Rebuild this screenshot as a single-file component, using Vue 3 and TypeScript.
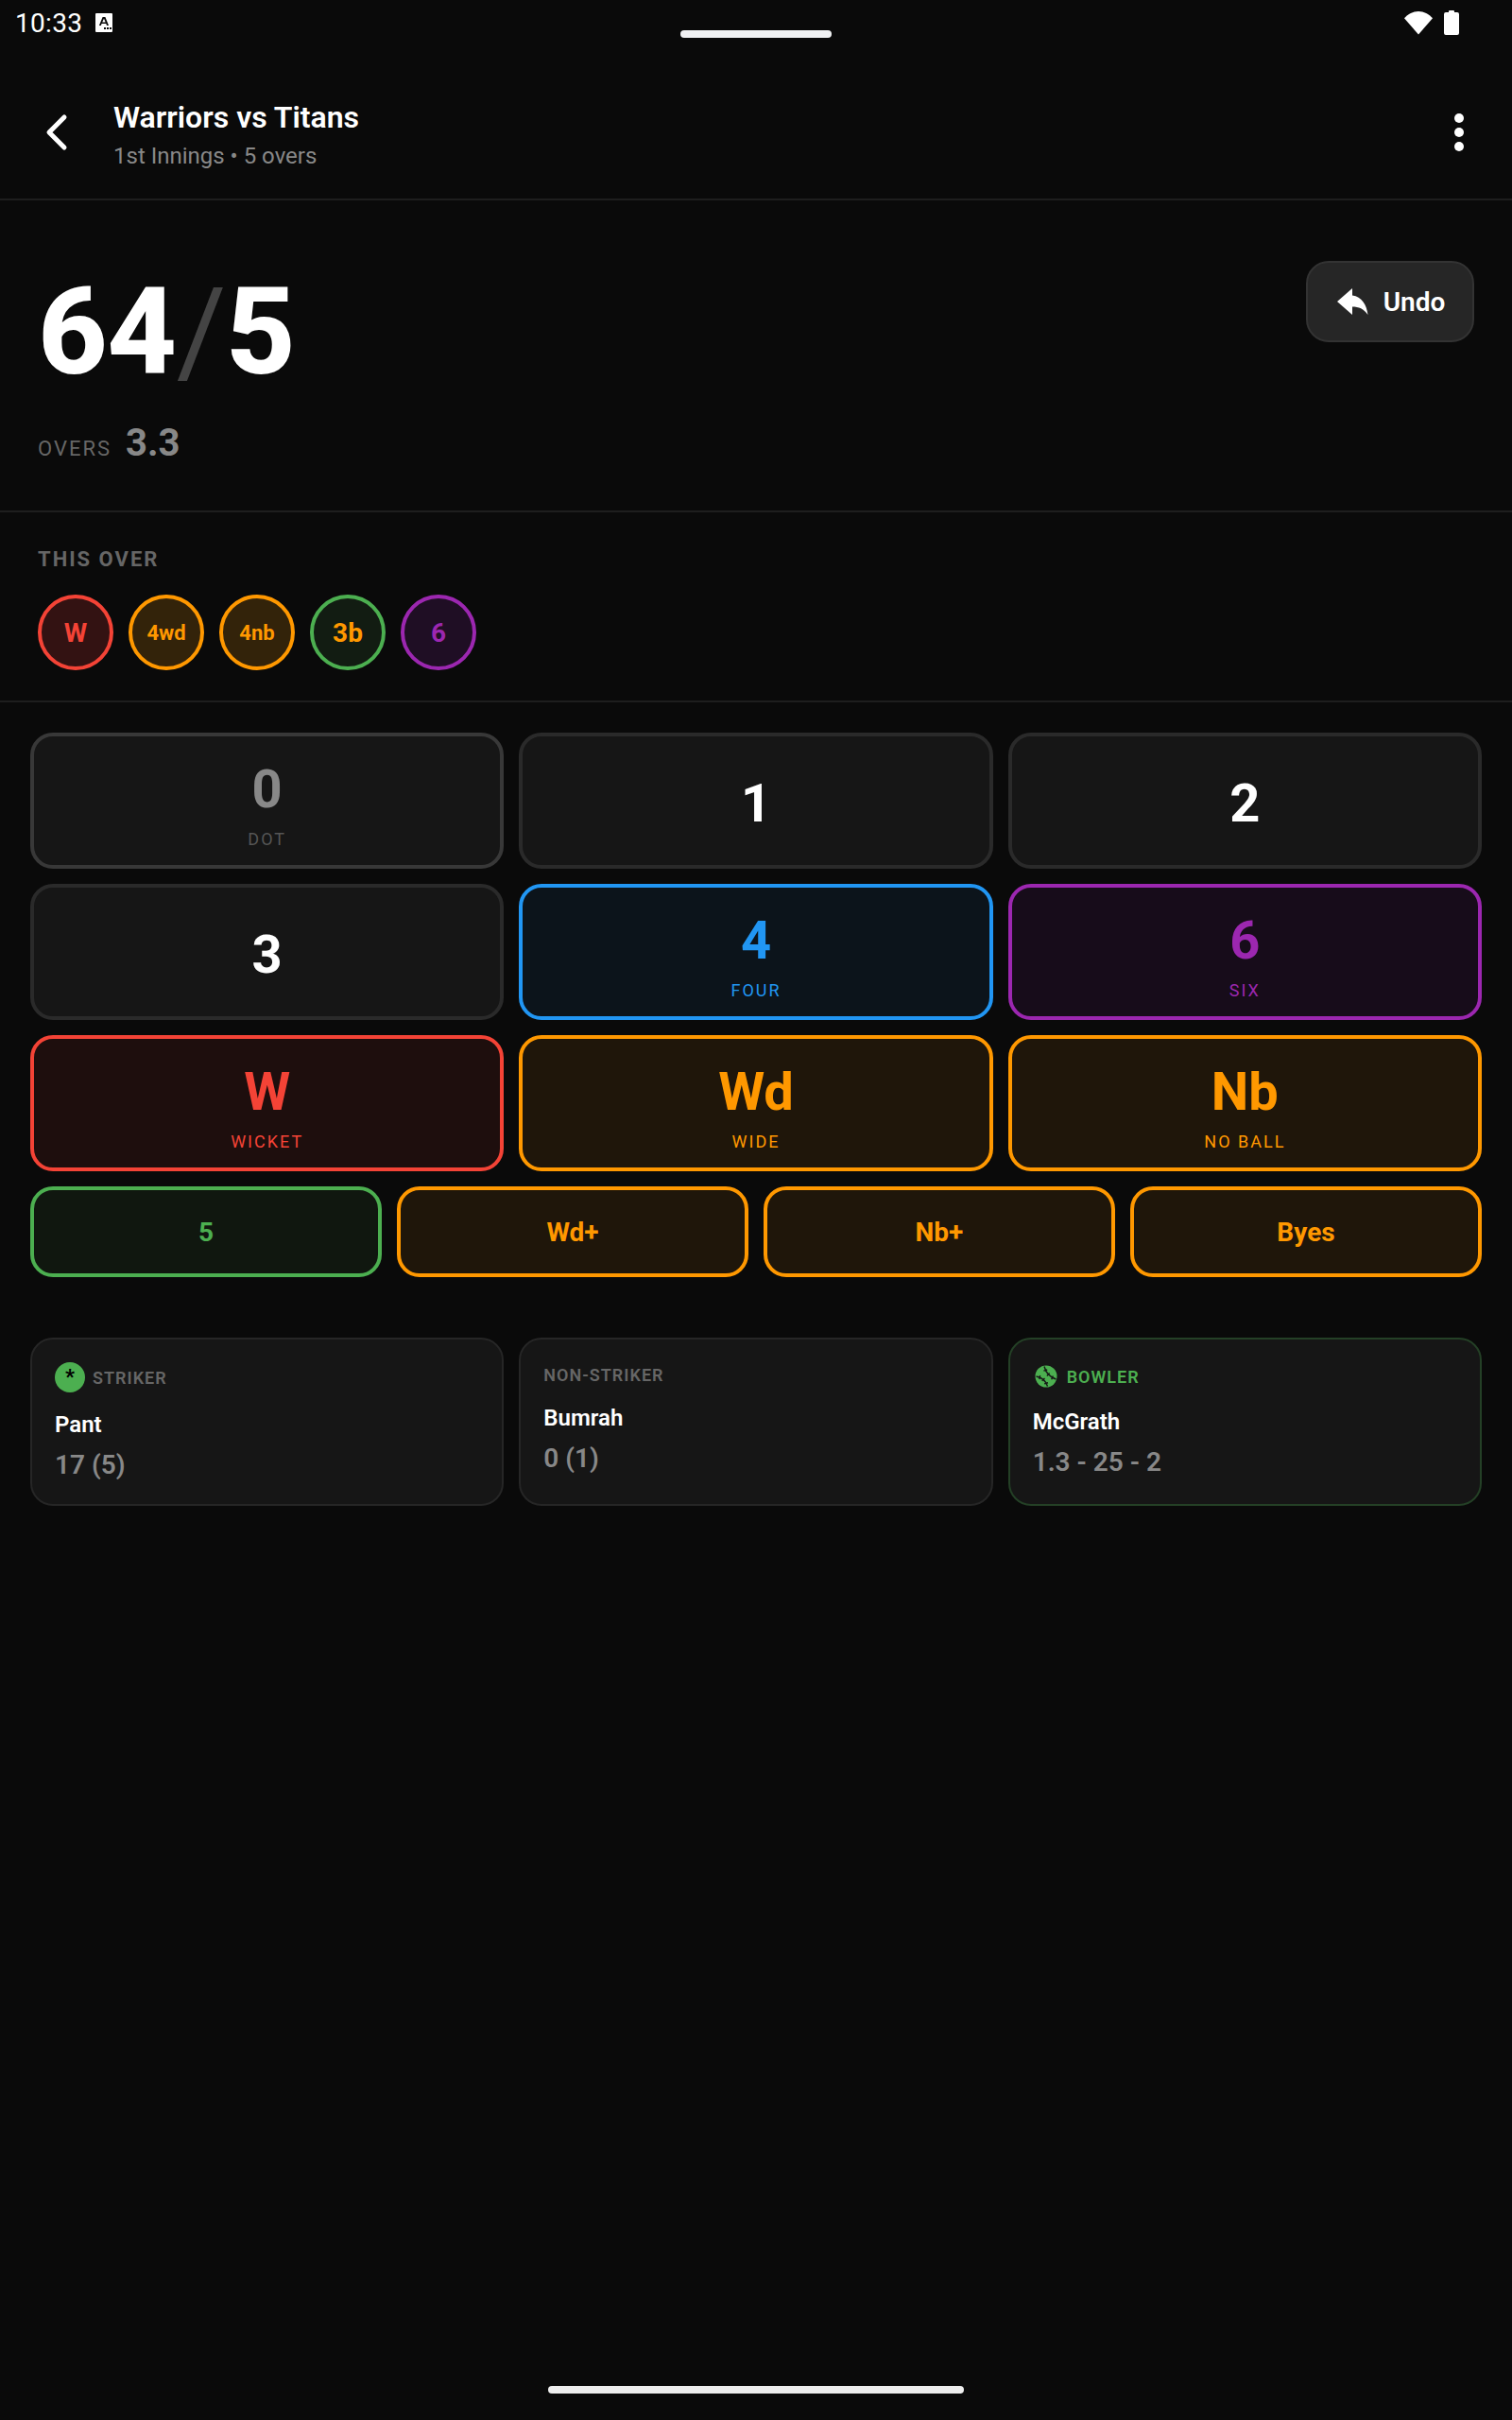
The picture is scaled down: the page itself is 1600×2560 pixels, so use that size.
<script setup lang="ts">
type Pad = { main: string; sub?: string; tone: string }

const balls = [
  { label: 'W', tone: 'red' },
  { label: '4wd', tone: 'amber' },
  { label: '4nb', tone: 'amber' },
  { label: '3b', tone: 'green' },
  { label: '6', tone: 'purple' },
]

const pads: Pad[] = [
  { main: '0', sub: 'DOT', tone: 'dot' },
  { main: '1', tone: 'plain' },
  { main: '2', tone: 'plain' },
  { main: '3', tone: 'plain' },
  { main: '4', sub: 'FOUR', tone: 'blue' },
  { main: '6', sub: 'SIX', tone: 'purple' },
  { main: 'W', sub: 'WICKET', tone: 'red' },
  { main: 'Wd', sub: 'WIDE', tone: 'amber' },
  { main: 'Nb', sub: 'NO BALL', tone: 'amber' },
]

const extras = [
  { main: '5', tone: 'green' },
  { main: 'Wd+', tone: 'amber' },
  { main: 'Nb+', tone: 'amber' },
  { main: 'Byes', tone: 'amber' },
]
</script>

<template>
  <div class="screen">
    <div class="pill-top"></div>

    <div class="status">
      <div class="status__left">
        <span class="clock">10:33</span>
        <svg class="kb" viewBox="0 0 18 20" width="18" height="20">
          <path fill="#fff" fill-rule="evenodd" d="M1 0h16a1 1 0 0 1 1 1v18a1 1 0 0 1-1 1H1a1 1 0 0 1-1-1V1a1 1 0 0 1 1-1zM7.600 4 3.900 13h2l.7-1.900h4.700l.7 1.900h2L10.400 4zM7.200 9.500l1.800-3.700 1.700 3.700zM9 15h2v2H9zM12 15h2v2h-2zM15 15h2v2h-2z"/>
        </svg>
      </div>
      <div class="status__right">
        <svg viewBox="0 0 30 26" width="30" height="26">
          <path fill="#fff" d="M15 25.500 0 8.200C4 4 9.200 1 15 1s11 3 15 7.200z"/>
        </svg>
        <svg viewBox="0 0 16 26" width="16" height="26">
          <path fill="#fff" d="M5 2V1A1 1 0 0 1 6 0h4a1 1 0 0 1 1 1v1h3a2 2 0 0 1 2 2V24a2 2 0 0 1-2 2H2a2 2 0 0 1-2-2V4a2 2 0 0 1 2-2z"/>
        </svg>
      </div>
    </div>

    <header class="topbar">
      <button class="iconbtn" type="button" aria-label="Back">
        <svg viewBox="0 0 24 40" width="24" height="40">
          <path d="M20 4 4 20l16 16" fill="none" stroke="#fff" stroke-width="5" stroke-linecap="round" stroke-linejoin="round"/>
        </svg>
      </button>
      <div class="topbar__title">
        <div class="title">Warriors vs Titans</div>
        <div class="subtitle">1st Innings • 5 overs</div>
      </div>
      <button class="iconbtn iconbtn--more" type="button" aria-label="More">
        <i></i><i></i><i></i>
      </button>
    </header>

    <section class="score">
      <div>
        <div class="runs">64<span class="slash">/</span>5</div>
        <div class="overs"><span class="overs__label">OVERS</span><span class="overs__value">3.3</span></div>
      </div>
      <button class="undo" type="button">
        <svg viewBox="0 0 33 28" width="33" height="28">
          <path fill="#fff" d="M16 0 0 14l16 14v-8.500c7 0 12 2 16.500 8.500C31 17 26 9 16 7.500z"/>
        </svg>
        <span>Undo</span>
      </button>
    </section>

    <section class="thisover">
      <div class="thisover__label">THIS OVER</div>
      <div class="balls">
        <div v-for="b in balls" :key="b.label" :class="['ball', `ball--${b.tone}`, { 'ball--long': b.label.length > 2 }]">{{ b.label }}</div>
      </div>
    </section>

    <section class="pads">
      <div class="pads__grid">
        <button v-for="p in pads" :key="p.main + p.tone" type="button" :class="['pad', `tone-${p.tone}`]">
          <span class="pad__main">{{ p.main }}</span>
          <span v-if="p.sub" class="pad__sub">{{ p.sub }}</span>
        </button>
      </div>
      <div class="pads__extras">
        <button v-for="e in extras" :key="e.main" type="button" :class="['extra', `tone-${e.tone}`]">{{ e.main }}</button>
      </div>
    </section>

    <section class="players">
      <div class="card">
        <div class="card__head">
          <span class="star">*</span>
          <span class="card__role">STRIKER</span>
        </div>
        <div class="card__name">Pant</div>
        <div class="card__stat">17 (5)</div>
      </div>
      <div class="card">
        <div class="card__head card__head--plain">
          <span class="card__role">NON-STRIKER</span>
        </div>
        <div class="card__name">Bumrah</div>
        <div class="card__stat">0 (1)</div>
      </div>
      <div class="card card--bowler">
        <div class="card__head card__head--bowl">
          <svg viewBox="0 0 28 28" width="28" height="28">
            <g transform="translate(2 2)">
              <circle cx="12" cy="12" r="11.500" fill="#4caf50"/>
              <path d="M10 1.500Q12.500 11.500 22.500 15M9.400 6.100 13.200 5M12.900 11.400 15.600 8.600M17.700 15.200 19.300 11.500M1.500 12Q10.500 13.500 13.500 22.500M4.800 15 5.600 11M7.700 16.800 10.500 14M10.200 19.700 14 18.700" fill="none" stroke="#161616" stroke-width="1.400"/>
            </g>
          </svg>
          <span class="card__role card__role--green">BOWLER</span>
        </div>
        <div class="card__name">McGrath</div>
        <div class="card__stat">1.3 - 25 - 2</div>
      </div>
    </section>

    <div class="pill-bottom"></div>
  </div>
</template>

<style>
html,
body {
  margin: 0;
  background: #0a0a0a;
}
</style>

<style scoped>
* {
  box-sizing: border-box;
}

button {
  font-family: inherit;
  padding: 0;
  border: none;
  background: none;
}

.screen {
  position: relative;
  height: 2560px;
  display: flex;
  flex-direction: column;
  background: #0a0a0a;
  color: #fff;
  font-family: Roboto, 'Liberation Sans', sans-serif;
  overflow: hidden;
}

.pill-top {
  position: absolute;
  left: 720px;
  top: 32px;
  width: 160px;
  height: 8px;
  border-radius: 4px;
  background: #f0f1f3;
}

.pill-bottom {
  position: absolute;
  left: 580px;
  bottom: 28px;
  width: 440px;
  height: 8px;
  border-radius: 4px;
  background: #eee;
}

.status {
  height: 48px;
  padding: 0 56px 0 16px;
  display: flex;
  justify-content: space-between;
  align-items: center;
}

.status__left {
  display: flex;
  align-items: center;
  gap: 14px;
}

.clock {
  font-size: 28px;
  letter-spacing: 0.3px;
}

.status__right {
  display: flex;
  align-items: center;
  gap: 12px;
}

.topbar {
  height: 164px;
  padding: 22px 36px 0 24px;
  display: flex;
  align-items: center;
  border-bottom: 2px solid #1e1e1e;
}

.iconbtn {
  width: 72px;
  height: 72px;
  display: flex;
  align-items: center;
  justify-content: center;
}

.iconbtn--more {
  flex-direction: column;
  gap: 5px;
  width: 40px;
}

.iconbtn--more i {
  width: 10px;
  height: 10px;
  border-radius: 50%;
  background: #fff;
}

.topbar__title {
  flex: 1;
  margin-left: 24px;
  padding-top: 5px;
}

.title {
  font-size: 32px;
  font-weight: 600;
  line-height: 40px;
}

.subtitle {
  margin-top: 5px;
  font-size: 24px;
  line-height: 32px;
  color: #888;
}

.score {
  height: 330px;
  padding: 64px 40px 0;
  display: flex;
  justify-content: space-between;
  align-items: flex-start;
  border-bottom: 2px solid #1e1e1e;
}

.runs {
  font-size: 128px;
  font-weight: 800;
  line-height: 150px;
  letter-spacing: -0.5px;
}

.slash {
  font-weight: 400;
  color: #444;
}

.overs {
  margin-top: 19px;
  display: flex;
  align-items: baseline;
  gap: 15px;
}

.overs__label {
  font-size: 22px;
  letter-spacing: 2px;
  color: #666;
}

.overs__value {
  font-size: 40px;
  font-weight: 700;
  color: #888;
}

.undo {
  width: 178px;
  height: 86px;
  padding-left: 2px;
  display: flex;
  align-items: center;
  justify-content: center;
  gap: 16px;
  border: 2px solid #333;
  border-radius: 24px;
  background: #262626;
  color: #fff;
  font-size: 28px;
  font-weight: 600;
}

.thisover {
  height: 201px;
  padding: 36px 40px 0;
  border-bottom: 2px solid #1e1e1e;
}

.thisover__label {
  font-size: 22px;
  font-weight: 700;
  line-height: 28px;
  letter-spacing: 2px;
  color: #666;
}

.balls {
  margin-top: 23px;
  display: flex;
  gap: 16px;
}

.ball {
  width: 80px;
  height: 80px;
  display: flex;
  align-items: center;
  justify-content: center;
  border: 4px solid;
  border-radius: 50%;
  font-size: 28px;
  font-weight: 700;
}

.ball--long {
  font-size: 22px;
}

.ball--red {
  color: #f44336;
  border-color: #f44336;
  background: #331212;
}

.ball--amber {
  color: #ff9800;
  border-color: #ff9800;
  background: #33230a;
}

.ball--green {
  color: #ff9800;
  border-color: #4caf50;
  background: #121c12;
}

.ball--purple {
  color: #9c27b0;
  border-color: #9c27b0;
  background: #1f0e24;
}

.pads {
  padding: 32px 32px 0;
  display: flex;
  flex-direction: column;
  gap: 16px;
}

.pads__grid {
  display: grid;
  grid-template-columns: repeat(3, 1fr);
  grid-auto-rows: 144px;
  gap: 16px;
}

.pads__extras {
  display: grid;
  grid-template-columns: repeat(4, 1fr);
  gap: 16px;
}

.pad,
.extra {
  border: 4px solid;
  border-radius: 24px;
}

.pad {
  padding-top: 6px;
  display: flex;
  flex-direction: column;
  align-items: center;
  justify-content: center;
}

.pad__main {
  font-size: 56px;
  font-weight: 700;
  line-height: 66px;
}

.pad__sub {
  margin-top: 9px;
  font-size: 18px;
  line-height: 22px;
  letter-spacing: 2px;
}

.extra {
  height: 96px;
  font-size: 28px;
  font-weight: 700;
}

.tone-plain {
  color: #fff;
  border-color: #2a2a2a;
  background: #161616;
}

.tone-dot {
  color: #888;
  border-color: #383838;
  background: #161616;
}

.tone-dot .pad__sub {
  color: #555;
}

.tone-blue {
  color: #2196f3;
  border-color: #2196f3;
  background: #0c141b;
}

.tone-purple {
  color: #9c27b0;
  border-color: #9c27b0;
  background: #170c1a;
}

.tone-red {
  color: #f44336;
  border-color: #f44336;
  background: #1e0e0d;
}

.tone-amber {
  color: #ff9800;
  border-color: #ff9800;
  background: #1f160a;
}

.tone-green {
  color: #4caf50;
  border-color: #4caf50;
  background: #10170f;
}

.players {
  margin-top: 64px;
  padding: 0 32px;
  display: grid;
  grid-template-columns: repeat(3, 1fr);
  gap: 16px;
}

.card {
  height: 178px;
  padding: 24px;
  border: 2px solid #262626;
  border-radius: 24px;
  background: #161616;
}

.card--bowler {
  border-color: #244026;
}

.card__head {
  height: 32px;
  margin-bottom: 16px;
  display: flex;
  align-items: center;
  gap: 8px;
}

.card__head--plain {
  height: 26px;
  margin-bottom: 15px;
}

.card__head--bowl {
  height: 30px;
  margin-bottom: 15px;
  gap: 8px;
}

.star {
  width: 32px;
  height: 32px;
  display: flex;
  justify-content: center;
  border-radius: 50%;
  background: #4caf50;
  color: #000;
  font-size: 22px;
  font-weight: 700;
  line-height: 32px;
}

.card__role {
  font-size: 18px;
  font-weight: 600;
  letter-spacing: 1px;
  color: #666;
}

.card__role--green {
  color: #4caf50;
}

.card__name {
  font-size: 24px;
  font-weight: 600;
  line-height: 36px;
}

.card__stat {
  margin-top: 6px;
  font-size: 28px;
  font-weight: 600;
  line-height: 38px;
  color: #888;
}
</style>
